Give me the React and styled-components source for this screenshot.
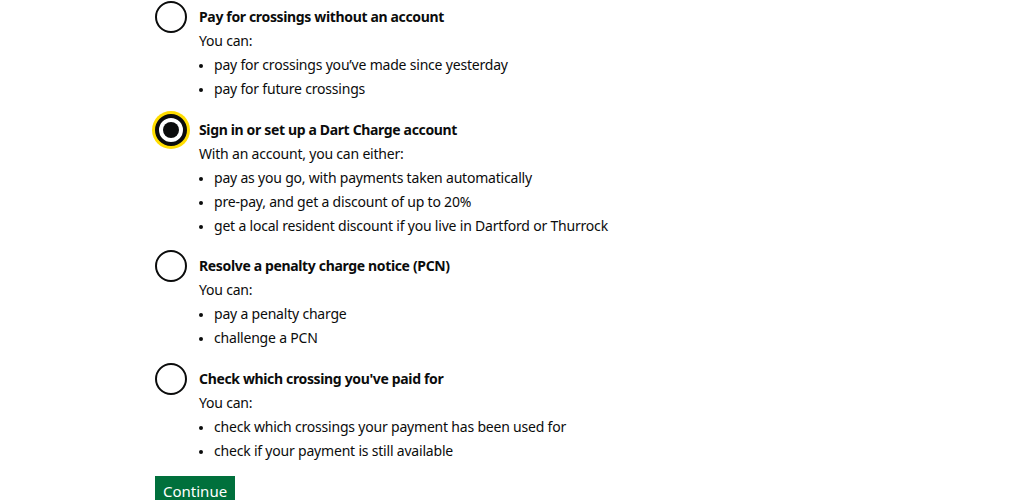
import styled, { createGlobalStyle } from "styled-components";

const GlobalStyle = createGlobalStyle`
  body {
    margin: 0;
    background: #ffffff;
    color: #0b0c0c;
    font-family: "Noto Sans", "Liberation Sans", Arial, sans-serif;
  }
`;

const options = [
  {
    title: "Pay for crossings without an account",
    intro: "You can:",
    items: ["pay for crossings you’ve made since yesterday", "pay for future crossings"],
  },
  {
    title: "Sign in or set up a Dart Charge account",
    intro: "With an account, you can either:",
    items: [
      "pay as you go, with payments taken automatically",
      "pre-pay, and get a discount of up to 20%",
      "get a local resident discount if you live in Dartford or Thurrock",
    ],
    checked: true,
  },
  {
    title: "Resolve a penalty charge notice (PCN)",
    intro: "You can:",
    items: ["pay a penalty charge", "challenge a PCN"],
  },
  {
    title: "Check which crossing you've paid for",
    intro: "You can:",
    items: [
      "check which crossings your payment has been used for",
      "check if your payment is still available",
    ],
  },
];

const App = () => {
  return (
    <Page>
      <GlobalStyle />
      <Radios>
        {options.map((opt) => (
          <RadioItem key={opt.title}>
            <Radio $checked={opt.checked} />
            <Content>
              <Title>{opt.title}</Title>
              <Text>{opt.intro}</Text>
              <List>
                {opt.items.map((item) => (
                  <li key={item}>{item}</li>
                ))}
              </List>
            </Content>
          </RadioItem>
        ))}
      </Radios>
      <Button>Continue</Button>
    </Page>
  );
};

export default App;

const Page = styled.div`
  padding: 1px 0 0 155px;
  height: 500px;
  box-sizing: border-box;
  overflow: hidden;
`;

const Radios = styled.div`
  display: flex;
  flex-direction: column;
  gap: 12.5px;
`;

const RadioItem = styled.div`
  display: flex;
  align-items: flex-start;
  gap: 12px;
`;

const Radio = styled.span`
  flex: none;
  width: 32px;
  height: 32px;
  box-sizing: border-box;
  border-radius: 50%;
  border: ${(p) => (p.$checked ? "4px" : "2px")} solid #0b0c0c;
  position: relative;
  background: #fff;
  box-shadow: ${(p) => (p.$checked ? "0 0 0 3px #ffdd00" : "none")};

  &::after {
    content: "";
    display: ${(p) => (p.$checked ? "block" : "none")};
    position: absolute;
    left: 50%;
    top: 50%;
    width: 16px;
    height: 16px;
    margin: -8px 0 0 -8px;
    border-radius: 50%;
    background: #0b0c0c;
  }
`;

const Content = styled.div`
  padding-top: 4px;
  font-size: 14px;
  line-height: 24px;
  letter-spacing: -0.2px;
`;

const Title = styled.div`
  font-weight: 700;
  letter-spacing: -0.35px;
`;

const Text = styled.div``;

const List = styled.ul`
  margin: 0;
  padding-left: 15px;

  li::marker {
    font-size: 12px;
  }
`;

const Button = styled.button`
  margin-top: 13px;
  padding: 5px 8px 6px;
  background: #00703c;
  color: #ffffff;
  border: 0;
  box-shadow: 0 2px 0 #002d18;
  font-family: "Noto Sans", "Liberation Sans", Arial, sans-serif;
  font-size: 15px;
  line-height: 20px;
`;
